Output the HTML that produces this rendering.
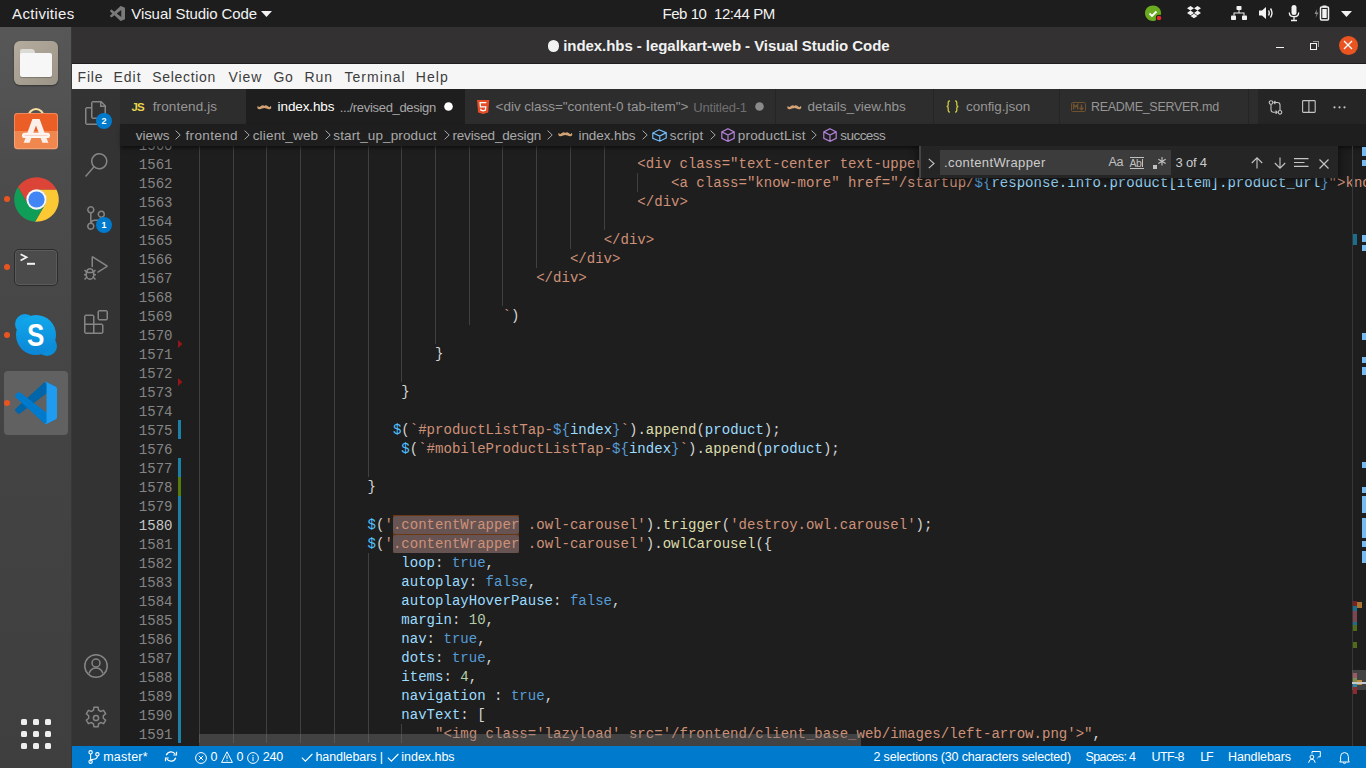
<!DOCTYPE html>
<html><head><meta charset="utf-8">
<style>
*{margin:0;padding:0;box-sizing:border-box}
html,body{width:1366px;height:768px;overflow:hidden;background:#1e1e1e;font-family:"Liberation Sans",sans-serif}
.a{position:absolute}
#topbar{left:0;top:0;width:1366px;height:27px;background:#1d1d1d}
#dock{left:0;top:27px;width:72px;height:741px;background:linear-gradient(#575757 0,#535353 68px,#4c4c4c 137px,#474747 273px,#434343 423px,#404040 623px,#3f3f3f 741px);border-right:1px solid #383838}
#title{left:72px;top:27px;width:1294px;height:37px;background:#333132;border-bottom:1px solid #1f1f1f}
#menu{left:72px;top:64px;width:1294px;height:25px;background:#f6f6f6}
#act{left:72px;top:89px;width:48px;height:657px;background:#333333}
#tabs{left:120px;top:89px;width:1246px;height:35px;background:#252526}
.tab{position:absolute;top:0;height:35px;background:#2d2d2d}
.tab.on{background:#1e1e1e}
#bc{left:120px;top:124px;width:1246px;height:22px;background:#1e1e1e;z-index:3;box-shadow:0 3px 4px -1px rgba(0,0,0,.55)}
#editor{left:120px;top:146px;width:1246px;height:600px;background:#1e1e1e;overflow:hidden}
#status{left:72px;top:746px;width:1294px;height:22px;background:#007acc}
.ln{position:absolute;left:0;width:172.5px;text-align:right;height:19px;line-height:19px;padding-top:2px;font-family:"Liberation Mono",monospace;font-size:14.05px;color:#858585}
.ln.act{color:#c6c6c6}
.cl{position:absolute;height:19px;line-height:19px;padding-top:1px;font-family:"Liberation Mono",monospace;font-size:14.05px;white-space:pre;z-index:2}
.ig{position:absolute;width:1px;background:#404040;z-index:1}
.fm{position:absolute;height:19px;background:#6b3612;z-index:1}
.fm::after{content:'';position:absolute;left:0;right:0;top:1px;bottom:0;background:#665352;border-radius:3px}
.s{color:#ce9178}.tp{color:#569cd6}.v{color:#9cdcfe}.f{color:#dcdcaa}.c{color:#4fc1ff}.d{color:#d4d4d4}.n{color:#b5cea8}
.t{position:absolute;white-space:pre;line-height:normal;z-index:20}
svg{overflow:visible}
</style></head><body>
<div id="topbar" class="a">
  <svg class="a" style="left:110px;top:6px" width="15" height="15" viewBox="0 0 100 100"><path fill="#7a7a7a" d="M96.46 10.8L75.86.88C73.47-.27 70.62.21 68.75 2.08L29.4 38 12.2 25c-1.6-1.2-3.8-1.1-5.3.2L1.3 30.3c-1.8 1.6-1.8 4.5 0 6.1L16.2 50 1.3 63.6c-1.8 1.6-1.8 4.5 0 6.1l5.5 5c1.5 1.4 3.7 1.5 5.3.3L29.4 62l39.4 35.9c1.9 1.9 4.7 2.4 7.1 1.2l20.6-9.9c2.2-1 3.5-3.2 3.5-5.6V16.4c0-2.4-1.4-4.6-3.5-5.6zM75 72.7L45.1 50 75 27.3z"/></svg>
  <svg class="a" style="left:261px;top:11px" width="11" height="6" viewBox="0 0 11 6"><path d="M0 0h11L5.5 6z" fill="#f2f2f2"/></svg>
<!-- status icons -->
  <svg class="a" style="left:1145px;top:5px" width="18" height="17" viewBox="0 0 18 17"><path d="M8 0.5c4.5 0 8 3.2 8 7.5s-3.5 8-8 8S0 12.5 0 8 3.5.5 8 .5z" fill="#6aab20"/><path d="M4.5 8.5l2.5 2.5 4.5-4.5" fill="none" stroke="#fff" stroke-width="1.8"/><circle cx="14" cy="13" r="3.2" fill="#1d1d1d"/><circle cx="14" cy="13" r="2.3" fill="#e52b2b"/></svg>
  <svg class="a" style="left:1187px;top:6px" width="14" height="13" viewBox="0 0 14 13" fill="#f2f2f2"><path d="M3.5 0L0 2.3 3.5 4.6 7 2.3zM10.5 0L7 2.3l3.5 2.3L14 2.3zM0 6.9l3.5 2.3L7 6.9 3.5 4.6zM10.5 4.6L7 6.9l3.5 2.3L14 6.9zM3.5 10l3.5 2.3 3.5-2.3L7 7.7z"/></svg>
  <svg class="a" style="left:1231px;top:6px" width="16" height="14" viewBox="0 0 16 14" fill="#f2f2f2"><rect x="5.5" y="0" width="5" height="4" rx=".8"/><rect x="0" y="9.5" width="5" height="4.5" rx=".8"/><rect x="11" y="9.5" width="5" height="4.5" rx=".8"/><path d="M7.5 4h1v2.5H13.5v3h-1V7.5h-9v2h-1v-3h5z"/></svg>
  <svg class="a" style="left:1259px;top:6px" width="16" height="14" viewBox="0 0 16 14"><path d="M0 4.5h3L7 1v12L3 9.5H0z" fill="#f2f2f2"/><path d="M9.5 4.5q1.5 2.5 0 5M11.5 2.5q3 4.5 0 9" fill="none" stroke="#f2f2f2" stroke-width="1.4"/></svg>
  <svg class="a" style="left:1288px;top:5px" width="12" height="17" viewBox="0 0 12 17"><rect x="3.5" y="0" width="5" height="10" rx="2.5" fill="#f2f2f2"/><path d="M1.3 7.5q0 4.2 4.7 4.2t4.7-4.2M6 11.7V15M3 15.5h6" fill="none" stroke="#f2f2f2" stroke-width="1.3"/></svg>
  <svg class="a" style="left:1314px;top:5px" width="17" height="16" viewBox="0 0 17 16"><path d="M3 4L0.5 9h2L1.5 13 4.5 7.5h-2z" fill="#8d8d8d"/><rect x="6.5" y="2" width="8" height="13" rx="1" fill="none" stroke="#f2f2f2" stroke-width="1.5"/><rect x="8.5" y="0.5" width="4" height="2" fill="#f2f2f2"/><rect x="8.3" y="4" width="4.4" height="9" fill="#f2f2f2"/></svg>
  <svg class="a" style="left:1341px;top:11px" width="11" height="6" viewBox="0 0 11 6"><path d="M0 0h11L5.5 6z" fill="#f2f2f2"/></svg>

</div>
<!-- dock -->
<div id="dock" class="a">
  <!-- files -->
  <div class="a" style="left:14px;top:14px;width:44px;height:44px;border-radius:6px;background:linear-gradient(135deg,#b3ac9f,#9c9587);box-shadow:0 1px 2px rgba(0,0,0,.4)"></div>
  <div class="a" style="left:20px;top:22px;width:15px;height:6px;border-radius:2px 4px 0 0;background:#dcdad5"></div>
  <div class="a" style="left:20px;top:26px;width:32px;height:24px;border-radius:2px;background:#f7f7f7;box-shadow:0 1px 1px rgba(0,0,0,.25)"></div>
  <!-- software -->
  <svg class="a" style="left:14px;top:79px" width="44" height="44" viewBox="0 0 44 44">
   <path d="M14.5 10.5A7.5 7.5 0 0 1 29.5 10.5" fill="none" stroke="#f6dda2" stroke-width="2.2"/>
   <rect x="0" y="7" width="44" height="36.2" rx="3.5" fill="#f0874f"/>
   <path d="M3.5 7h37a3.5 3.5 0 0 1 3.5 3.5V25H0V10.5A3.5 3.5 0 0 1 3.5 7z" fill="#eb5f27"/>
   <rect x=".5" y="7.5" width="43" height="35.2" rx="3" fill="none" stroke="rgba(255,255,255,.25)" stroke-width="1"/>
   <path d="M9.7 36.8L18.4 13h7.2l8.7 23.8h-5.9L22 19.6 15.6 36.8z" fill="#fbefea"/>
   <rect x="8" y="26.8" width="28" height="5.2" rx="2.6" fill="#fdf5f2"/>
   <path d="M10.5 29.4h23" stroke="#f4c9b6" stroke-width=".8"/>
  </svg>
  <!-- chrome -->
  <div class="a" style="left:4px;top:169px;width:6px;height:6px;border-radius:50%;background:#e95420"></div>
  <svg class="a" style="left:13.7px;top:149.5px" width="45" height="45" viewBox="0 0 45 45"><path fill="#db4437" d="M22.50 12.65 L42.51 12.65 A22.3 22.3 0 0 0 3.97 10.10 L13.97 27.42 A9.85 9.85 0 0 1 22.50 12.65Z"/><path fill="#fcc934" d="M31.03 27.42 L21.03 44.75 A22.3 22.3 0 0 0 42.51 12.65 L22.50 12.65 A9.85 9.85 0 0 1 31.03 27.42Z"/><path fill="#0f9d58" d="M13.97 27.42 L3.97 10.10 A22.3 22.3 0 0 0 21.03 44.75 L31.03 27.42 A9.85 9.85 0 0 1 13.97 27.42Z"/><circle cx="22.5" cy="22.5" r="10.15" fill="#f5f5f5"/><circle cx="22.5" cy="22.5" r="8.1" fill="#4285f4"/></svg>
  <!-- terminal -->
  <div class="a" style="left:4px;top:237px;width:6px;height:6px;border-radius:50%;background:#e95420"></div>
  <div class="a" style="left:14px;top:221.5px;width:44px;height:37px;border-radius:5px;background:#4b4b4b;border:1px solid #2c2c2c;box-shadow:inset 0 0 0 1px #5b5b5b"></div>
  <svg class="a" style="left:14px;top:221px" width="44" height="37" viewBox="0 0 44 37"><path d="M6.6 6.2L12.6 9.3 6.6 12.4" fill="none" stroke="#f4f4f4" stroke-width="1.7"/><rect x="13" y="14.8" width="8" height="2" fill="#f4f4f4"/></svg>
  <!-- skype -->
  <div class="a" style="left:4px;top:305px;width:6px;height:6px;border-radius:50%;background:#e95420"></div>
  <div class="a" style="left:15px;top:287px;width:20px;height:20px;border-radius:50%;background:#0fa0e8"></div>
  <div class="a" style="left:37px;top:309px;width:20px;height:20px;border-radius:50%;background:#0a8ed8"></div>
  <div class="a" style="left:16px;top:288px;width:40px;height:40px;border-radius:50%;background:linear-gradient(#12a9ec,#0b86d6)"></div>
  <div class="a" style="left:26.5px;top:290.5px;color:#fff;font-size:31px;font-weight:bold;line-height:36px;transform:scaleX(.84);transform-origin:0 0">S</div>
  <!-- vscode -->
  <div class="a" style="left:4px;top:344px;width:64px;height:64px;border-radius:4px;background:#616161"></div>
  <div class="a" style="left:4px;top:373px;width:6px;height:6px;border-radius:50%;background:#e95420"></div>
  <svg class="a" style="left:15px;top:355px" width="42" height="42" viewBox="0 0 100 100">
   <path fill="#0065A9" d="M96.46 10.8L75.86.88C73.47-.27 70.62.21 68.75 2.08L1.3 63.58c-1.82 1.66-1.81 4.51 0 6.16l5.51 5.01c1.49 1.35 3.72 1.45 5.32.24L93.36 13.37C96.09 11.3 100 13.25 100 16.67v-.24c0-2.4-1.38-4.59-3.54-5.63z"/>
   <path fill="#007ACC" d="M96.46 89.2l-20.6 9.92c-2.39 1.15-5.24.67-7.11-1.21L1.3 36.42c-1.82-1.66-1.81-4.51 0-6.16l5.51-5.01c1.49-1.35 3.72-1.45 5.32-.24l81.23 61.62c2.73 2.07 6.64.12 6.64-3.3v.24c0 2.4-1.38 4.59-3.54 5.63z"/>
   <path fill="#1F9CF0" d="M75.86 99.13c-2.39 1.15-5.24.66-7.11-1.21 2.31 2.31 6.25.67 6.25-2.59V4.67c0-3.26-3.94-4.9-6.25-2.59 1.87-1.87 4.72-2.36 7.11-1.21l20.6 9.91c2.16 1.04 3.54 3.23 3.54 5.63v67.17c0 2.4-1.38 4.59-3.54 5.63l-20.6 9.92z"/>
  </svg>
  <!-- app grid -->
  <svg class="a" style="left:21px;top:692px" width="30" height="30" viewBox="0 0 30 30" fill="#eeeeee">
   <rect x="0" y="0" width="6" height="6" rx="1.5"/><rect x="12" y="0" width="6" height="6" rx="1.5"/><rect x="24" y="0" width="6" height="6" rx="1.5"/>
   <rect x="0" y="12" width="6" height="6" rx="1.5"/><rect x="12" y="12" width="6" height="6" rx="1.5"/><rect x="24" y="12" width="6" height="6" rx="1.5"/>
   <rect x="0" y="24" width="6" height="6" rx="1.5"/><rect x="12" y="24" width="6" height="6" rx="1.5"/><rect x="24" y="24" width="6" height="6" rx="1.5"/>
  </svg>
</div>

<div id="title" class="a">
  <div class="a" style="left:475.5px;top:13px;width:11.5px;height:11.5px;border-radius:50%;background:#f2f2f2"></div>
<div class="a" style="left:1204px;top:19.5px;width:8px;height:1.7px;background:#f4f4f4"></div>
  <div class="a" style="left:1238px;top:16px;width:6.5px;height:6.5px;border:1.5px solid #f4f4f4"></div>
  <div class="a" style="left:1240.5px;top:14px;width:6px;height:6px;border-top:1.3px solid #9a9a9a;border-right:1.3px solid #9a9a9a"></div>
  <div class="a" style="left:1266.5px;top:8.5px;width:19px;height:19px;border-radius:50%;background:#e95420"></div>
  <svg class="a" style="left:1271px;top:13px" width="10" height="10" viewBox="0 0 10 10"><path d="M1 1L9 9M9 1L1 9" stroke="#fff" stroke-width="1.3"/></svg>

</div>
<div id="menu" class="a"></div>
<div id="act" class="a">
  <!-- explorer -->
  <svg class="a" style="left:12px;top:12px" width="24" height="24" viewBox="0 0 24 24"><path fill="#858585" d="M17.5 0h-9L7 1.5V6H2.5L1 7.5v15.07L2.5 24h12.07L16 22.57V18h4.7l1.3-1.43V4.5L17.5 0zm0 2.12l2.38 2.38H17.5V2.12zm-3 20.38h-12v-15H7v9.07L8.5 18h6v4.5zm6-6h-12v-15H16V6h4.5v10.5z"/></svg>
  <div class="a" style="left:24px;top:24px;width:16px;height:16px;border-radius:50%;background:#007acc"></div>
  <div class="a" style="left:24px;top:24px;width:16px;height:16px;line-height:16px;text-align:center;color:#fff;font-size:9px;font-weight:bold">2</div>
  <!-- search -->
  <svg class="a" style="left:12px;top:64px" width="24" height="24" viewBox="0 0 24 24"><path fill="#858585" d="M15.25 0a8.25 8.25 0 0 0-6.18 13.72L1 22.88l1.12 1 8.05-9.12A8.251 8.251 0 1 0 15.25.01V0zm0 15a6.75 6.75 0 1 1 0-13.5 6.75 6.75 0 0 1 0 13.5z"/></svg>
  <!-- scm -->
  <svg class="a" style="left:12px;top:117px" width="24" height="24" viewBox="0 0 24 24"><path fill="#858585" d="M21.007 8.222A3.738 3.738 0 0 0 15.045 5.2a3.737 3.737 0 0 0 1.156 6.583 2.988 2.988 0 0 1-2.668 1.67h-2.99a4.456 4.456 0 0 0-2.989 1.165V7.4a3.737 3.737 0 1 0-1.494 0v9.117a3.776 3.776 0 1 0 1.816.099 2.99 2.99 0 0 1 2.668-1.667h2.99a4.484 4.484 0 0 0 4.223-3.039 3.736 3.736 0 0 0 3.25-3.687zM4.565 3.738a2.242 2.242 0 1 1 4.484 0 2.242 2.242 0 0 1-4.484 0zm4.484 16.441a2.242 2.242 0 1 1-4.484 0 2.242 2.242 0 0 1 4.484 0zm8.221-9.715a2.242 2.242 0 1 1 0-4.485 2.242 2.242 0 0 1 0 4.485z"/></svg>
  <div class="a" style="left:24px;top:128px;width:16px;height:16px;border-radius:50%;background:#007acc"></div>
  <div class="a" style="left:24px;top:128px;width:16px;height:16px;line-height:16px;text-align:center;color:#fff;font-size:9px;font-weight:bold">1</div>
  <!-- run -->
  <svg class="a" style="left:12px;top:167px" width="24" height="24" viewBox="0 0 24 24"><path fill="#858585" d="M10.94 13.5l-1.32 1.32a3.73 3.73 0 0 0-7.24 0L1.06 13.5 0 14.56l1.72 1.72-.22.22V18H0v1.5h1.5v.08c.077.489.214.966.41 1.42L0 22.94 1.06 24l1.65-1.65A4.308 4.308 0 0 0 6 24a4.31 4.31 0 0 0 3.29-1.65L10.94 24 12 22.94 10.09 21c.198-.464.336-.951.41-1.45v-.1H12V18h-1.5v-1.5l-.22-.22L12 14.56l-1.06-1.06zM6 13.5a2.25 2.25 0 0 1 2.25 2.25h-4.5A2.25 2.25 0 0 1 6 13.5zm3 6a3.33 3.33 0 0 1-3 3 3.33 3.33 0 0 1-3-3v-2.25h6v2.25zm14.76-9.9v1.26L13.5 17.37V15.6l8.5-5.37L9 2v9.46a5.07 5.07 0 0 0-1.5-.72V.63L8.64 0l15.12 9.6z"/></svg>
  <!-- extensions -->
  <svg class="a" style="left:12px;top:221px" width="24" height="24" viewBox="0 0 24 24"><path fill="#858585" d="M13.5 1.5L15 0h7.5L24 1.5V9l-1.5 1.5H15L13.5 9V1.5zm1.5 0V9h7.5V1.5H15zM0 15V6l1.5-1.5H9L10.5 6v7.5H18l1.5 1.5v7.5L18 24H1.5L0 22.5V15zm9-1.5V6H1.5v7.5H9zM9 15H1.5v7.5H9V15zm1.5 7.5H18V15h-7.5v7.5z"/></svg>
  <!-- account -->
  <svg class="a" style="left:12px;top:565px" width="24" height="24" viewBox="0 0 24 24" fill="none" stroke="#858585" stroke-width="1.5"><circle cx="12" cy="12" r="11.2"/><circle cx="12" cy="9" r="4"/><path d="M5 19.5q2-5.5 7-5.5t7 5.5"/></svg>
  <!-- gear -->
  <svg class="a" style="left:12px;top:617px" width="24" height="24" viewBox="0 0 24 24" fill="none" stroke="#858585" stroke-width="1.5"><path d="M10 1.2h4l.6 3 2.1 1.2 2.9-1 2 3.4-2.3 2v2.4l2.3 2-2 3.4-2.9-1-2.1 1.2-.6 3h-4l-.6-3-2.1-1.2-2.9 1-2-3.4 2.3-2v-2.4l-2.3-2 2-3.4 2.9 1 2.1-1.2z"/><circle cx="12" cy="12" r="2.6"/></svg>
</div>
<div id="tabs" class="a">
  <div class="tab" style="left:0;width:125.5px"></div>
  <div class="tab on" style="left:125.5px;width:219px"></div>
  <div class="tab" style="left:344.5px;width:310.5px"></div>
  <div class="tab" style="left:656px;width:157px"></div>
  <div class="tab" style="left:814px;width:125px"></div>
  <div class="tab" style="left:940px;width:187.5px"></div>
  <div class="tab" style="left:1128.5px;width:9.5px"></div>
  <!-- icons -->
  <svg class="a" style="left:136.7px;top:15.9px" width="14.6" height="4.2" viewBox="0 0 30 9"><path fill="#d3a375" d="M0 5.2C0 2.8 1.6 1.8 2.6 2.4 1.7 3.3 2.3 5 3.8 4.5 6.3 3.7 9 .5 11.8.5c1.5 0 2.4.6 3.2 1.4C15.8 1.1 16.7.5 18.2.5 21 .5 23.7 3.7 26.2 4.5c1.5.5 2.1-1.2 1.2-2.1 1-.6 2.6.4 2.6 2.8 0 2.4-2.2 3.8-5 3.8-3.6 0-6.6-2.5-10-2.5S8.6 9 5 9C2.2 9 0 7.6 0 5.2z"/></svg>
  <svg class="a" style="left:324px;top:13px" width="9" height="9" viewBox="0 0 9 9"><circle cx="4.5" cy="4.5" r="4.3" fill="#ffffff"/></svg>
  <svg class="a" style="left:356.9px;top:10.9px" width="12.3" height="14" viewBox="0 0 12.3 14"><path d="M0 0h12.3l-1.1 12.4L6.15 14 1.1 12.4z" fill="#e44d26"/><path d="M9.3 2.6H3.1l.35 4.3h5.3l-.3 3.2-2.3.7-2.3-.7-.1-1.4" fill="none" stroke="#fff" stroke-width="1.3"/></svg>
  <svg class="a" style="left:635px;top:13px" width="9" height="9" viewBox="0 0 9 9"><circle cx="4.5" cy="4.5" r="4.3" fill="#8a8a8a"/></svg>
  <svg class="a" style="left:666.5px;top:15.9px" width="14.6" height="4.2" viewBox="0 0 30 9"><path fill="#d3a375" d="M0 5.2C0 2.8 1.6 1.8 2.6 2.4 1.7 3.3 2.3 5 3.8 4.5 6.3 3.7 9 .5 11.8.5c1.5 0 2.4.6 3.2 1.4C15.8 1.1 16.7.5 18.2.5 21 .5 23.7 3.7 26.2 4.5c1.5.5 2.1-1.2 1.2-2.1 1-.6 2.6.4 2.6 2.8 0 2.4-2.2 3.8-5 3.8-3.6 0-6.6-2.5-10-2.5S8.6 9 5 9C2.2 9 0 7.6 0 5.2z"/></svg>
  <svg class="a" style="left:825.5px;top:11px" width="13" height="13" viewBox="0 0 13 13" fill="none" stroke="#cbcb41" stroke-width="1.3"><path d="M4 .8q-1.8 0-1.8 1.8v2.3Q2.2 6.5.6 6.5q1.6 0 1.6 1.6v2.3q0 1.8 1.8 1.8M9 .8q1.8 0 1.8 1.8v2.3q0 1.6 1.6 1.6-1.6 0-1.6 1.6v2.3q0 1.8-1.8 1.8"/></svg>
  <svg class="a" style="left:951px;top:13px" width="15" height="10" viewBox="0 0 15 10" fill="none" stroke="#6e5230" stroke-width="1"><rect x=".5" y=".5" width="14" height="9" rx="1.2"/><path d="M2.6 7.5V2.6l2 2.2 2-2.2v4.9M10.5 2.5v5M8.5 5.8l2 1.9 2-1.9" stroke-width="1.5"/></svg>
  <!-- actions -->
  <svg class="a" style="left:1148px;top:11px" width="15" height="15" viewBox="0 0 15 15" fill="none" stroke="#c5c5c5" stroke-width="1.1"><circle cx="3" cy="2.5" r="1.8"/><circle cx="12" cy="12.3" r="1.8"/><path d="M3 4.3v5.5q0 2.5 2.5 2.5h3.5M7.6 10.7l1.6 1.6-1.6 1.6M12 10.5V5q0-2.5-2.5-2.5H6M7.4 1l-1.6 1.5 1.6 1.6"/></svg>
  <svg class="a" style="left:1182px;top:11px" width="14" height="13" viewBox="0 0 14 13" fill="none" stroke="#c5c5c5" stroke-width="1.1"><rect x=".6" y=".6" width="12.6" height="11.8" rx=".8"/><path d="M6.9.6v11.8"/></svg>
  <svg class="a" style="left:1213px;top:17px" width="14" height="3" viewBox="0 0 14 3" fill="#c5c5c5"><circle cx="1.5" cy="1.3" r="1.1"/><circle cx="6.5" cy="1.3" r="1.1"/><circle cx="11.5" cy="1.3" r="1.1"/></svg>
</div>
<div id="bc" class="a">
  <svg class="a" style="left:54.5px;top:6px" width="6" height="10" viewBox="0 0 6 10"><path d="M.6 .6L5.2 5 .6 9.4" fill="none" stroke="#a9a9a9" stroke-width="1"/></svg>
<svg class="a" style="left:124.0px;top:6px" width="6" height="10" viewBox="0 0 6 10"><path d="M.6 .6L5.2 5 .6 9.4" fill="none" stroke="#a9a9a9" stroke-width="1"/></svg>
<svg class="a" style="left:204.9px;top:6px" width="6" height="10" viewBox="0 0 6 10"><path d="M.6 .6L5.2 5 .6 9.4" fill="none" stroke="#a9a9a9" stroke-width="1"/></svg>
<svg class="a" style="left:324.0px;top:6px" width="6" height="10" viewBox="0 0 6 10"><path d="M.6 .6L5.2 5 .6 9.4" fill="none" stroke="#a9a9a9" stroke-width="1"/></svg>
<svg class="a" style="left:427.3px;top:6px" width="6" height="10" viewBox="0 0 6 10"><path d="M.6 .6L5.2 5 .6 9.4" fill="none" stroke="#a9a9a9" stroke-width="1"/></svg>
<svg class="a" style="left:521.5px;top:6px" width="6" height="10" viewBox="0 0 6 10"><path d="M.6 .6L5.2 5 .6 9.4" fill="none" stroke="#a9a9a9" stroke-width="1"/></svg>
<svg class="a" style="left:589.5px;top:6px" width="6" height="10" viewBox="0 0 6 10"><path d="M.6 .6L5.2 5 .6 9.4" fill="none" stroke="#a9a9a9" stroke-width="1"/></svg>
<svg class="a" style="left:691.4px;top:6px" width="6" height="10" viewBox="0 0 6 10"><path d="M.6 .6L5.2 5 .6 9.4" fill="none" stroke="#a9a9a9" stroke-width="1"/></svg>
<svg class="a" style="left:438px;top:8px" width="14.6" height="4.2" viewBox="0 0 30 9"><path fill="#d3a375" d="M0 5.2C0 2.8 1.6 1.8 2.6 2.4 1.7 3.3 2.3 5 3.8 4.5 6.3 3.7 9 .5 11.8.5c1.5 0 2.4.6 3.2 1.4C15.8 1.1 16.7.5 18.2.5 21 .5 23.7 3.7 26.2 4.5c1.5.5 2.1-1.2 1.2-2.1 1-.6 2.6.4 2.6 2.8 0 2.4-2.2 3.8-5 3.8-3.6 0-6.6-2.5-10-2.5S8.6 9 5 9C2.2 9 0 7.6 0 5.2z"/></svg>
<svg class="a" style="left:532px;top:5px" width="15" height="13" viewBox="0 0 15 13" fill="none" stroke="#75beff" stroke-width="1.2"><path d="M7 .8L14.2 3.6V9L7.8 12.2.8 9.4V4z M.8 4L7.8 7 14.2 3.6 M7.8 7v5.2"/></svg>
<svg class="a" style="left:600.6px;top:4px" width="14" height="14" viewBox="0 0 14 14" fill="none" stroke="#b180d7" stroke-width="1.2"><path d="M7 .7l6.2 3.2v6.4L7 13.3.8 10.3V3.9z M.8 3.9L7 7l6.2-3.1 M7 7v6.3"/></svg>
<svg class="a" style="left:703.0px;top:4px" width="14" height="14" viewBox="0 0 14 14" fill="none" stroke="#b180d7" stroke-width="1.2"><path d="M7 .7l6.2 3.2v6.4L7 13.3.8 10.3V3.9z M.8 3.9L7 7l6.2-3.1 M7 7v6.3"/></svg>
</div>
<div id="editor" class="a">
<div style="position:absolute;left:-120px;top:-146px;width:1366px;height:768px">
<div class="ln" style="top:135px">1560</div>
<div class="ln" style="top:154px">1561</div>
<div class="cl" style="top:154px;left:637.36px"><span class="s">&lt;div class="text-center text-uppercase"&gt;</span></div>
<div class="ln" style="top:173px">1562</div>
<div class="cl" style="top:173px;left:671.08px"><span class="s">&lt;a class="know-more" href="/startup/</span><span class="tp">${</span><span class="v">response.info.product[item].product_url</span><span class="tp">}</span><span class="s">"&gt;know more&lt;/a&gt;</span></div>
<div class="ln" style="top:192px">1563</div>
<div class="cl" style="top:192px;left:637.36px"><span class="s">&lt;/div&gt;</span></div>
<div class="ln" style="top:211px">1564</div>
<div class="ln" style="top:230px">1565</div>
<div class="cl" style="top:230px;left:603.64px"><span class="s">&lt;/div&gt;</span></div>
<div class="ln" style="top:249px">1566</div>
<div class="cl" style="top:249px;left:569.92px"><span class="s">&lt;/div&gt;</span></div>
<div class="ln" style="top:268px">1567</div>
<div class="cl" style="top:268px;left:536.20px"><span class="s">&lt;/div&gt;</span></div>
<div class="ln" style="top:287px">1568</div>
<div class="ln" style="top:306px">1569</div>
<div class="cl" style="top:306px;left:502.48px"><span class="s">`</span><span class="d">)</span></div>
<div class="ln" style="top:325px">1570</div>
<div class="ln" style="top:344px">1571</div>
<div class="cl" style="top:344px;left:435.04px"><span class="d">}</span></div>
<div class="ln" style="top:363px">1572</div>
<div class="ln" style="top:382px">1573</div>
<div class="cl" style="top:382px;left:401.32px"><span class="d">}</span></div>
<div class="ln" style="top:401px">1574</div>
<div class="ln" style="top:420px">1575</div>
<div class="cl" style="top:420px;left:392.89px"><span class="c">$</span><span class="d">(</span><span class="s">`#productListTap-</span><span class="tp">${</span><span class="v">index</span><span class="tp">}</span><span class="s">`</span><span class="d">)</span><span class="d">.</span><span class="f">append</span><span class="d">(</span><span class="v">product</span><span class="d">)</span><span class="d">;</span></div>
<div class="ln" style="top:439px">1576</div>
<div class="cl" style="top:439px;left:401.32px"><span class="c">$</span><span class="d">(</span><span class="s">`#mobileProductListTap-</span><span class="tp">${</span><span class="v">index</span><span class="tp">}</span><span class="s">`</span><span class="d">)</span><span class="d">.</span><span class="f">append</span><span class="d">(</span><span class="v">product</span><span class="d">)</span><span class="d">;</span></div>
<div class="ln" style="top:458px">1577</div>
<div class="ln" style="top:477px">1578</div>
<div class="cl" style="top:477px;left:367.60px"><span class="d">}</span></div>
<div class="ln" style="top:496px">1579</div>
<div class="ln act" style="top:515px">1580</div>
<div class="cl" style="top:515px;left:367.60px"><span class="c">$</span><span class="d">(</span><span class="s">'.contentWrapper .owl-carousel'</span><span class="d">)</span><span class="d">.</span><span class="f">trigger</span><span class="d">(</span><span class="s">'destroy.owl.carousel'</span><span class="d">)</span><span class="d">;</span></div>
<div class="ln" style="top:534px">1581</div>
<div class="cl" style="top:534px;left:367.60px"><span class="c">$</span><span class="d">(</span><span class="s">'.contentWrapper .owl-carousel'</span><span class="d">)</span><span class="d">.</span><span class="f">owlCarousel</span><span class="d">(</span><span class="d">{</span></div>
<div class="ln" style="top:553px">1582</div>
<div class="cl" style="top:553px;left:401.32px"><span class="v">loop</span><span class="d">: </span><span class="tp">true</span><span class="d">,</span></div>
<div class="ln" style="top:572px">1583</div>
<div class="cl" style="top:572px;left:401.32px"><span class="v">autoplay</span><span class="d">: </span><span class="tp">false</span><span class="d">,</span></div>
<div class="ln" style="top:591px">1584</div>
<div class="cl" style="top:591px;left:401.32px"><span class="v">autoplayHoverPause</span><span class="d">: </span><span class="tp">false</span><span class="d">,</span></div>
<div class="ln" style="top:610px">1585</div>
<div class="cl" style="top:610px;left:401.32px"><span class="v">margin</span><span class="d">: </span><span class="n">10</span><span class="d">,</span></div>
<div class="ln" style="top:629px">1586</div>
<div class="cl" style="top:629px;left:401.32px"><span class="v">nav</span><span class="d">: </span><span class="tp">true</span><span class="d">,</span></div>
<div class="ln" style="top:648px">1587</div>
<div class="cl" style="top:648px;left:401.32px"><span class="v">dots</span><span class="d">: </span><span class="tp">true</span><span class="d">,</span></div>
<div class="ln" style="top:667px">1588</div>
<div class="cl" style="top:667px;left:401.32px"><span class="v">items</span><span class="d">: </span><span class="n">4</span><span class="d">,</span></div>
<div class="ln" style="top:686px">1589</div>
<div class="cl" style="top:686px;left:401.32px"><span class="v">navigation</span><span class="d"> : </span><span class="tp">true</span><span class="d">,</span></div>
<div class="ln" style="top:705px">1590</div>
<div class="cl" style="top:705px;left:401.32px"><span class="v">navText</span><span class="d">: </span><span class="d">[</span></div>
<div class="ln" style="top:724px">1591</div>
<div class="cl" style="top:724px;left:435.04px"><span class="s">"&lt;img class='lazyload' src='/frontend/client_base_web/images/left-arrow.png'&gt;"</span><span class="d">,</span></div>
<div class="ig" style="left:199px;top:135px;height:608px"></div>
<div class="ig" style="left:233px;top:135px;height:608px"></div>
<div class="ig" style="left:266px;top:135px;height:608px"></div>
<div class="ig" style="left:300px;top:135px;height:608px"></div>
<div class="ig" style="left:334px;top:135px;height:608px"></div>
<div class="ig" style="left:368px;top:135px;height:342px"></div>
<div class="ig" style="left:368px;top:553px;height:190px"></div>
<div class="ig" style="left:401px;top:135px;height:247px"></div>
<div class="ig" style="left:435px;top:135px;height:209px"></div>
<div class="ig" style="left:469px;top:135px;height:190px"></div>
<div class="ig" style="left:502px;top:135px;height:171px"></div>
<div class="ig" style="left:536px;top:135px;height:133px"></div>
<div class="ig" style="left:570px;top:135px;height:114px"></div>
<div class="ig" style="left:604px;top:135px;height:95px"></div>
<div class="ig" style="left:637px;top:173px;height:19px"></div>
<div class="ig" style="left:401px;top:724px;height:19px"></div>
<div class="fm" style="top:515px;left:392.9px;width:126.4px"></div>
<div class="fm" style="top:534px;left:392.9px;width:126.4px"></div>
<div class="a" style="left:178px;top:420px;width:3px;height:19px;background:#1b81a8"></div>
<div class="a" style="left:178px;top:458px;width:3px;height:285px;background:#1b81a8"></div>
<div class="a" style="left:178px;top:477px;width:3px;height:19px;background:#587c0c;z-index:1"></div>
<svg class="a" style="left:178px;top:340px" width="5" height="8" viewBox="0 0 5 8"><path d="M0 0L4.5 4 0 8z" fill="#94151b"/></svg>
<svg class="a" style="left:178px;top:378px" width="5" height="8" viewBox="0 0 5 8"><path d="M0 0L4.5 4 0 8z" fill="#94151b"/></svg>
<div class="a" style="left:199px;top:734px;width:662px;height:12px;background:rgba(121,121,121,.4);z-index:6"></div>
<div class="a" style="left:1352px;top:146px;width:1px;height:600px;background:#383838;z-index:6"></div>
<div class="a" style="left:1362px;top:146.5px;width:4px;height:9.5px;background:#75baf0;z-index:7"></div>
<div class="a" style="left:1362px;top:159.5px;width:4px;height:6.5px;background:#75baf0;z-index:7"></div>
<div class="a" style="left:1362px;top:235px;width:4px;height:6.5px;background:#75baf0;z-index:7"></div>
<div class="a" style="left:1362px;top:244.5px;width:4px;height:6.5px;background:#75baf0;z-index:7"></div>
<div class="a" style="left:1362px;top:333px;width:4px;height:7px;background:#75baf0;z-index:7"></div>
<div class="a" style="left:1362px;top:356.5px;width:4px;height:6.0px;background:#75baf0;z-index:7"></div>
<div class="a" style="left:1362px;top:366.5px;width:4px;height:8.5px;background:#75baf0;z-index:7"></div>
<div class="a" style="left:1362px;top:462px;width:4px;height:5.5px;background:#75baf0;z-index:7"></div>
<div class="a" style="left:1362px;top:487px;width:4px;height:5.5px;background:#75baf0;z-index:7"></div>
<div class="a" style="left:1362px;top:495.5px;width:4px;height:17.5px;background:#75baf0;z-index:7"></div>
<div class="a" style="left:1362px;top:517.5px;width:4px;height:20.5px;background:#75baf0;z-index:7"></div>
<div class="a" style="left:1362px;top:541px;width:4px;height:5.5px;background:#75baf0;z-index:7"></div>
<div class="a" style="left:1362px;top:550.5px;width:4px;height:12.5px;background:#75baf0;z-index:7"></div>
<div class="a" style="left:1353px;top:234px;width:3.5px;height:10.5px;background:#1b6f8c;z-index:7"></div>
<div class="a" style="left:1353px;top:600.5px;width:3.5px;height:5.0px;background:#7a1f22;z-index:7"></div>
<div class="a" style="left:1356.5px;top:601.5px;width:5.5px;height:6.0px;background:#a7732e;z-index:7"></div>
<div class="a" style="left:1353px;top:605.5px;width:3.5px;height:5.5px;background:#1b6f8c;z-index:7"></div>
<div class="a" style="left:1353px;top:611px;width:3.5px;height:11px;background:#7d4452;z-index:7"></div>
<div class="a" style="left:1353px;top:622px;width:3.5px;height:3px;background:#1b6f8c;z-index:7"></div>
<div class="a" style="left:1353px;top:625px;width:3.5px;height:5.5px;background:#4f6c19;z-index:7"></div>
<div class="a" style="left:1353px;top:641.5px;width:3.5px;height:6.5px;background:#4f6c19;z-index:7"></div>
<div class="a" style="left:1352px;top:670px;width:14px;height:20px;background:rgba(121,121,121,.4);z-index:8"></div>
<div class="a" style="left:1353px;top:673px;width:3.5px;height:4.5px;background:#9a5a66;z-index:9"></div>
<div class="a" style="left:1353px;top:677.5px;width:3.5px;height:4.0px;background:#7d8c4a;z-index:9"></div>
<div class="a" style="left:1356.5px;top:679.5px;width:5.5px;height:5.5px;background:#c08a45;z-index:9"></div>
<div class="a" style="left:1353px;top:684px;width:3.5px;height:3px;background:#2b86a8;z-index:9"></div>
<div class="a" style="left:1353px;top:687px;width:3.5px;height:7px;background:#8b2a30;z-index:9"></div>
<div class="a" style="left:1352px;top:682px;width:14px;height:1.5px;background:#c8c8c8;z-index:10"></div>
<div class="a" style="left:919px;top:146px;width:419px;height:32px;background:#252526;box-shadow:0 0 8px 2px rgba(0,0,0,.45);z-index:12"></div>
<div class="a" style="left:919px;top:146px;width:2px;height:32px;background:#454545;z-index:13"></div>
<svg class="a" style="left:928px;top:157.5px;z-index:13" width="7" height="11" viewBox="0 0 7 11"><path d="M.8 .8L6 5.5.8 10.2" fill="none" stroke="#c5c5c5" stroke-width="1.1"/></svg>
<div class="a" style="left:940px;top:150px;width:231px;height:25px;background:#3c3c3c;z-index:13"></div>
<div class="a" style="left:1108.5px;top:155px;color:#c0c0c0;font-size:12.5px;z-index:14;letter-spacing:-.3px">Aa</div>
<div class="a" style="left:1130px;top:156.5px;width:14px;height:12.5px;border-top:1px solid #c0c0c0;border-bottom:1px solid #c0c0c0;z-index:14"></div>
<div class="a" style="left:1129.5px;top:156.5px;color:#c0c0c0;font-size:10.5px;z-index:14;letter-spacing:-.5px">Ab</div>
<div class="a" style="left:1142px;top:159px;width:1.2px;height:8px;background:#c0c0c0;z-index:14"></div>
<div class="a" style="left:1152.7px;top:165px;width:4.5px;height:4px;background:#c0c0c0;z-index:14"></div>
<svg class="a" style="left:1157.5px;top:156.5px;z-index:14" width="8" height="9" viewBox="0 0 8 9" stroke="#c0c0c0" stroke-width="1.1"><path d="M4 0v8.5M.3 2.2l7.4 4.2M7.7 2.2L.3 6.4"/></svg>
<svg class="a" style="left:1250.5px;top:157px;z-index:14" width="12" height="12" viewBox="0 0 12 12" fill="none" stroke="#c5c5c5" stroke-width="1.1"><path d="M6 11.5V.8M.8 6L6 .8 11.2 6"/></svg>
<svg class="a" style="left:1273.5px;top:157px;z-index:14" width="12" height="12" viewBox="0 0 12 12" fill="none" stroke="#c5c5c5" stroke-width="1.1"><path d="M6 .5v10.7M.8 6L6 11.2 11.2 6"/></svg>
<svg class="a" style="left:1294px;top:158px;z-index:14" width="15" height="9" viewBox="0 0 15 9" fill="none" stroke="#c5c5c5" stroke-width="1.1"><path d="M0 .6h14.5M0 4.5h10.5M0 8.4h14.5"/></svg>
<svg class="a" style="left:1319px;top:158.5px;z-index:14" width="10" height="10" viewBox="0 0 10 10" fill="none" stroke="#c5c5c5" stroke-width="1.2"><path d="M.5 .5l9 9M9.5 .5l-9 9"/></svg>
</div>
</div>
<div id="status" class="a">
  <svg class="a" style="left:16px;top:4px" width="12" height="14" viewBox="0 0 12 14" fill="none" stroke="#fff" stroke-width="1.1"><circle cx="2.6" cy="2.3" r="1.7"/><circle cx="2.6" cy="11.7" r="1.7"/><circle cx="9.4" cy="4.3" r="1.7"/><path d="M2.6 4v6M9.4 6q0 3-4 3.3-2.8.3-2.8 2.2"/></svg>
<svg class="a" style="left:92px;top:5px" width="14" height="11" viewBox="0 0 14 11" fill="none" stroke="#fff" stroke-width="1.2"><path d="M2.3 4.3A5 5 0 0 1 11.3 3.2M11.7 6.7A5 5 0 0 1 2.7 7.8"/><path d="M12.5 .8v3.2H9.3M1.5 10.2V7h3.2" stroke-width="1.2"/></svg>
<svg class="a" style="left:123px;top:5.5px" width="12" height="12" viewBox="0 0 12 12" fill="none" stroke="#fff" stroke-width="1"><circle cx="6" cy="6" r="5.4"/><path d="M3.8 3.8l4.4 4.4M8.2 3.8L3.8 8.2"/></svg>
<svg class="a" style="left:149px;top:5px" width="12" height="12" viewBox="0 0 12 12" fill="none" stroke="#fff" stroke-width="1"><path d="M6 .8L11.4 11.4H.6z"/><path d="M6 4.5v3.6M6 9.3v1"/></svg>
<svg class="a" style="left:175px;top:5.5px" width="12" height="12" viewBox="0 0 12 12" fill="none" stroke="#fff" stroke-width="1"><circle cx="6" cy="6" r="5.4"/><path d="M6 5v4M6 3v1.2"/></svg>
<svg class="a" style="left:228.5px;top:7px" width="12" height="9" viewBox="0 0 12 9" fill="none" stroke="#fff" stroke-width="1.1"><path d="M.8 4.6l3.6 3.6L11.4 1"/></svg>
<svg class="a" style="left:315px;top:7px" width="12" height="9" viewBox="0 0 12 9" fill="none" stroke="#fff" stroke-width="1.1"><path d="M.8 4.6l3.6 3.6L11.4 1"/></svg>
<svg class="a" style="left:1235.5px;top:5px" width="13" height="12" viewBox="0 0 13 12" fill="none" stroke="#fff" stroke-width="1"><path d="M4 2.6V.5h8.3v5.3H10.7L9.4 7"/><circle cx="3.9" cy="6" r="1.9"/><path d="M.6 11.8q.5-3.6 3.3-3.6t3.3 3.6"/></svg>
<svg class="a" style="left:1267px;top:4.5px" width="11" height="13" viewBox="0 0 11 13" fill="none" stroke="#fff" stroke-width="1"><path d="M1.6 10V5.5a3.9 3.9 0 0 1 7.8 0V10l1 1H.6z M4.3 11.4a1.2 1.2 0 0 0 2.4 0"/></svg>
</div>
<div class="t" style="left:12.10px;top:5.05px;font-size:15px;color:#f2f2f2;letter-spacing:0.322px">Activities</div>
<div class="t" style="left:131.30px;top:5.05px;font-size:15px;color:#f2f2f2;letter-spacing:-0.082px">Visual Studio Code</div>
<div class="t" style="left:662.40px;top:5.05px;font-size:15px;color:#f2f2f2;letter-spacing:-0.427px">Feb 10  12:44 PM</div>
<div class="t" style="left:563.20px;top:36.55px;font-size:15px;color:#f2f2f2;letter-spacing:-0.056px;font-weight:bold">index.hbs - legalkart-web - Visual Studio Code</div>
<div class="t" style="left:77.60px;top:68.98px;font-size:14px;color:#3d3d3d;letter-spacing:0.800px">File</div>
<div class="t" style="left:113.50px;top:68.98px;font-size:14px;color:#3d3d3d;letter-spacing:1.000px">Edit</div>
<div class="t" style="left:152.30px;top:68.98px;font-size:14px;color:#3d3d3d;letter-spacing:0.675px">Selection</div>
<div class="t" style="left:228.40px;top:68.98px;font-size:14px;color:#3d3d3d;letter-spacing:0.933px">View</div>
<div class="t" style="left:273.60px;top:68.98px;font-size:14px;color:#3d3d3d;letter-spacing:0.600px">Go</div>
<div class="t" style="left:304.40px;top:68.98px;font-size:14px;color:#3d3d3d;letter-spacing:0.950px">Run</div>
<div class="t" style="left:344.50px;top:68.98px;font-size:14px;color:#3d3d3d;letter-spacing:1.043px">Terminal</div>
<div class="t" style="left:415.70px;top:68.98px;font-size:14px;color:#3d3d3d;letter-spacing:1.100px">Help</div>
<div class="t" style="left:131.60px;top:101.30px;font-size:11.5px;color:#e8d44d;letter-spacing:-1.100px;font-weight:bold">JS</div>
<div class="t" style="left:152.70px;top:99.44px;font-size:13.5px;color:#969696;letter-spacing:0.140px">frontend.js</div>
<div class="t" style="left:277.60px;top:99.44px;font-size:13.5px;color:#ffffff;letter-spacing:-0.113px">index.hbs</div>
<div class="t" style="left:339.70px;top:99.91px;font-size:13px;color:#a8a8a8;letter-spacing:-0.318px">.../revised_design</div>
<div class="t" style="left:495.60px;top:99.44px;font-size:13.5px;color:#969696;letter-spacing:-0.035px">&lt;div class="content-0 tab-item"&gt;</div>
<div class="t" style="left:693.30px;top:99.91px;font-size:13px;color:#6f6f6f;letter-spacing:-0.211px">Untitled-1</div>
<div class="t" style="left:807.50px;top:99.44px;font-size:13.5px;color:#969696;letter-spacing:-0.007px">details_view.hbs</div>
<div class="t" style="left:965.90px;top:99.44px;font-size:13.5px;color:#969696;letter-spacing:-0.010px">config.json</div>
<div class="t" style="left:1090.90px;top:100.38px;font-size:12.5px;color:#969696;letter-spacing:-0.280px">README_SERVER.md</div>
<div class="t" style="left:135.70px;top:128.44px;font-size:13.5px;color:#a9a9a9;letter-spacing:0.025px">views</div>
<div class="t" style="left:185.50px;top:128.44px;font-size:13.5px;color:#a9a9a9;letter-spacing:0.357px">frontend</div>
<div class="t" style="left:252.70px;top:128.44px;font-size:13.5px;color:#a9a9a9;letter-spacing:0.178px">client_web</div>
<div class="t" style="left:333.30px;top:128.44px;font-size:13.5px;color:#a9a9a9;letter-spacing:0.127px">start_up_product</div>
<div class="t" style="left:452.40px;top:128.44px;font-size:13.5px;color:#a9a9a9;letter-spacing:-0.146px">revised_design</div>
<div class="t" style="left:578.50px;top:128.44px;font-size:13.5px;color:#a9a9a9;letter-spacing:-0.088px">index.hbs</div>
<div class="t" style="left:669.80px;top:128.44px;font-size:13.5px;color:#a9a9a9;letter-spacing:0.240px">script</div>
<div class="t" style="left:737.80px;top:128.44px;font-size:13.5px;color:#a9a9a9;letter-spacing:0.170px">productList</div>
<div class="t" style="left:840.30px;top:128.44px;font-size:13.5px;color:#a9a9a9;letter-spacing:-0.550px">success</div>
<div class="t" style="left:103.20px;top:750.38px;font-size:12.5px;color:#ffffff;letter-spacing:0.217px">master*</div>
<div class="t" style="left:210.50px;top:750.38px;font-size:12.5px;color:#ffffff;letter-spacing:0.000px">0</div>
<div class="t" style="left:236.60px;top:750.38px;font-size:12.5px;color:#ffffff;letter-spacing:0.000px">0</div>
<div class="t" style="left:262.80px;top:750.38px;font-size:12.5px;color:#ffffff;letter-spacing:-0.200px">240</div>
<div class="t" style="left:315.50px;top:750.38px;font-size:12.5px;color:#ffffff;letter-spacing:-0.100px">handlebars |</div>
<div class="t" style="left:401.30px;top:750.38px;font-size:12.5px;color:#ffffff;letter-spacing:-0.025px">index.hbs</div>
<div class="t" style="left:873.50px;top:750.38px;font-size:12.5px;color:#ffffff;letter-spacing:-0.167px">2 selections (30 characters selected)</div>
<div class="t" style="left:1085.60px;top:750.38px;font-size:12.5px;color:#ffffff;letter-spacing:-0.650px">Spaces: 4</div>
<div class="t" style="left:1151.50px;top:750.38px;font-size:12.5px;color:#ffffff;letter-spacing:-0.625px">UTF-8</div>
<div class="t" style="left:1200.20px;top:750.38px;font-size:12.5px;color:#ffffff;letter-spacing:-1.200px">LF</div>
<div class="t" style="left:1228.00px;top:750.38px;font-size:12.5px;color:#ffffff;letter-spacing:-0.111px">Handlebars</div>
<div class="t" style="left:944.10px;top:154.91px;font-size:13px;color:#cccccc;letter-spacing:0.379px">.contentWrapper</div>
<div class="t" style="left:1175.50px;top:154.91px;font-size:13px;color:#cccccc;letter-spacing:-0.200px">3 of 4</div>
</body></html>
